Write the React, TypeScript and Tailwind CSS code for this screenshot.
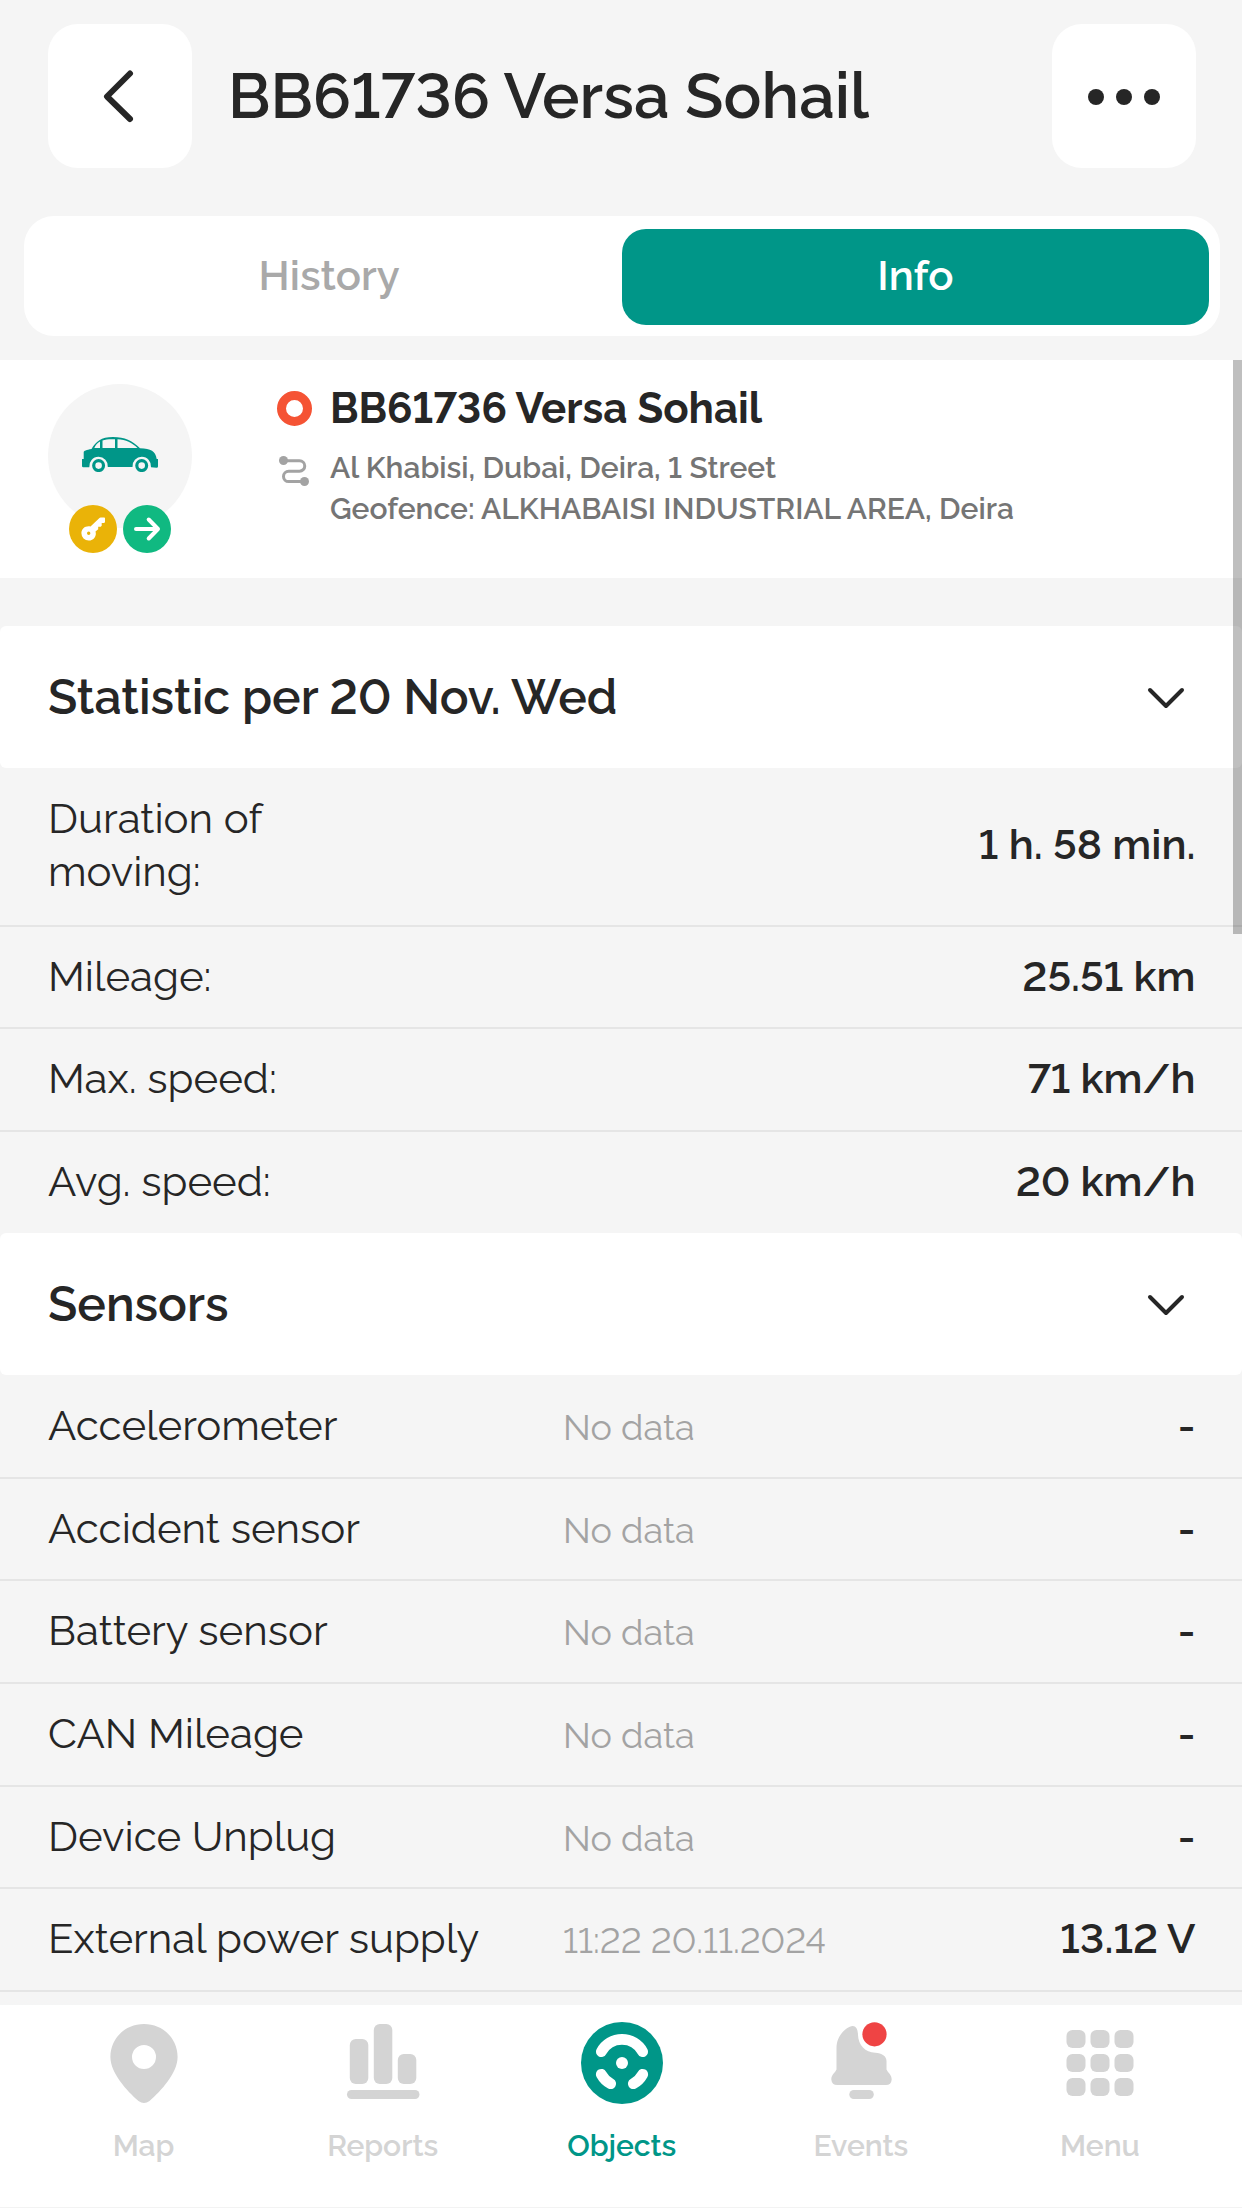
import clsx from 'clsx';
import type { ReactNode } from 'react';

const stats = [
  { label: 'Duration of moving:', value: '1 h. 58 min.' },
  { label: 'Mileage:', value: '25.51 km' },
  { label: 'Max. speed:', value: '71 km/h' },
  { label: 'Avg. speed:', value: '20 km/h' },
];

const sensors = [
  { label: 'Accelerometer', time: 'No data', value: '-' },
  { label: 'Accident sensor', time: 'No data', value: '-' },
  { label: 'Battery sensor', time: 'No data', value: '-' },
  { label: 'CAN Mileage', time: 'No data', value: '-' },
  { label: 'Device Unplug', time: 'No data', value: '-' },
  { label: 'External power supply', time: '11:22 20.11.2024', value: '13.12 V' },
];

const CarIcon = () => (
  <svg width="76" height="35" viewBox="0 0 76 35" fill="#009688">
    <path
      fillRule="evenodd"
      d="M1.7 15.5C1.7 13.6 4.5 13 9.5 12C14 4.5 19 0 31 0C43 0 50 3.5 58 11.3C69 12 73.5 14 74.7 22H76V29.5Q76 30.7 74.5 30.7L69 30.2A9.3 9.3 0 1 0 50.5 30H25.8A9.3 9.3 0 1 0 7.3 30.2H1.3Q0 30.2 0 29V22H1.7ZM12.3 11H18V4.6C15.2 6 13.5 8.2 12.3 11ZM20.5 11H33V2.3C28 2 23.8 2.3 20.5 3.5ZM35.5 11H55.5C50 5.7 44 2.6 35.5 2.3Z"
    />
    <circle cx="16.6" cy="28.6" r="4.9" fill="none" stroke="#009688" strokeWidth="3.2" />
    <circle cx="59.7" cy="28.6" r="4.9" fill="none" stroke="#009688" strokeWidth="3.2" />
  </svg>
);

const KeyIcon = () => (
  <svg width="48" height="48" viewBox="0 0 48 48" fill="#fff">
    <path
      fillRule="evenodd"
      d="M30.2 13.2Q30.7 12.5 31.7 12.5H35.2Q36 12.5 36 13.3V17.2L35 18H32.7V20.7L31.7 21.7H29.2V24.2L26.5 26.5C28 31 24.7 35.6 19.7 35.6A7.3 7.3 0 0 1 12.4 28.3C12.4 23.5 16.5 20.5 21.5 21.5ZM19.7 26.6A1.7 1.7 0 1 0 19.7 30A1.7 1.7 0 1 0 19.7 26.6Z"
    />
  </svg>
);

const ArrowIcon = () => (
  <svg width="48" height="48" viewBox="0 0 48 48" fill="none" stroke="#fff" strokeWidth="4" strokeLinecap="round" strokeLinejoin="round">
    <path d="M13 24H35M25.7 14.5L35 24L25.7 33.5" />
  </svg>
);

const RouteIcon = () => (
  <svg width="30" height="30" viewBox="0 0 30 30" fill="none" stroke="#a3a3a3" strokeWidth="3">
    <path d="M4.5 4.7H20.5A5.2 5.2 0 0 1 20.5 15.2H9.7A5.2 5.2 0 0 0 9.7 25.6H25.5" />
    <circle cx="4.5" cy="4.5" r="4.5" fill="#a3a3a3" stroke="none" />
    <circle cx="25.5" cy="25.5" r="4.5" fill="#a3a3a3" stroke="none" />
  </svg>
);

const MapIcon = () => (
  <path
    fillRule="evenodd"
    d="M48 9C67 9 81.6 23.5 81.6 42C81.6 58 65 76 53.5 86Q48 90 42.5 86C31 76 14.4 58 14.4 42C14.4 23.5 29 9 48 9ZM48 30A12 12 0 1 0 48 54A12 12 0 1 0 48 30Z"
  />
);

const ReportsIcon = () => (
  <>
    <rect x="14.8" y="24" width="18.5" height="45" rx="6" />
    <rect x="38.8" y="9" width="18.5" height="60" rx="6" />
    <rect x="62.8" y="39" width="18.5" height="30" rx="6" />
    <rect x="12" y="75" width="72.5" height="9" rx="4.5" />
  </>
);

const ObjectsIcon = () => (
  <>
    <circle cx="48" cy="48" r="41" />
    <circle cx="48" cy="48" r="6" fill="#fff" />
    <g fill="none" stroke="#fff" strokeWidth="10.8" strokeLinecap="round">
      <path d="M27.3 36.7A23.5 23.5 0 0 1 68.7 36.7" />
      <path d="M27.3 59.3A23.5 23.5 0 0 0 36.7 68.7" />
      <path d="M68.7 59.3A23.5 23.5 0 0 1 59.3 68.7" />
    </g>
  </>
);

const EventsIcon = () => (
  <>
    <path d="M36.8 11.7C41.8 9.5 44.9 12.5 45 20C45.300 30 52.300 37.5 62.300 37.7C68.800 38 73.500 41 73.500 46V54.5C74.800 57.5 78.700 59.5 78.700 64.5Q78.300 70 72.800 70H24.300Q18.800 70 18.300 64.5C18.300 59.5 22.300 57.5 23.500 54.5V33C23.500 23.5 29.300 15 36.8 11.7Z" />
    <rect x="36.3" y="75" width="24.5" height="9" rx="4.5" />
    <circle cx="61.5" cy="19.3" r="12.1" fill="#ef4444" />
  </>
);

const MenuIcon = () => (
  <>
    {[15, 39, 63].map(y =>
      [14.5, 38.5, 62.5].map(x => (
        <rect key={`${x}-${y}`} x={x} y={y} width="19" height="18" rx="6" />
      ))
    )}
  </>
);

const navItems = [
  { label: 'Map', icon: <MapIcon /> },
  { label: 'Reports', icon: <ReportsIcon /> },
  { label: 'Objects', icon: <ObjectsIcon />, active: true },
  { label: 'Events', icon: <EventsIcon /> },
  { label: 'Menu', icon: <MenuIcon /> },
];

const Header = () => (
  <header className="flex h-[216px] shrink-0 items-start pt-6 pr-[46.5px] pl-12">
    <button className="flex size-36 items-center justify-center rounded-[30px] bg-white">
      <svg width="36" height="54" viewBox="0 0 36 54" fill="none" stroke="#262626" strokeWidth="6" strokeLinecap="round" strokeLinejoin="round">
        <path d="M28 4.5L5 27.5L28 50" />
      </svg>
    </button>
    <h1 className="flex h-36 flex-1 items-center pl-9 text-[63px] font-semibold">BB61736 Versa Sohail</h1>
    <button className="flex size-36 items-center justify-center gap-3 rounded-[30px] bg-white pt-0.5">
      <span className="size-4 rounded-full bg-neutral-800" />
      <span className="size-4 rounded-full bg-neutral-800" />
      <span className="size-4 rounded-full bg-neutral-800" />
    </button>
  </header>
);

const Tabs = () => (
  <div className="mr-[22.5px] mb-6 ml-6 flex h-[120px] shrink-0 rounded-[30px] bg-white pt-[13px] pr-[11px] pb-[11px] pl-3 text-[42px] font-semibold">
    <button className="flex-1 pb-1 text-[#a9a9a9]">History</button>
    <button className="flex-1 rounded-3xl bg-[#009688] pb-1 text-white">Info</button>
  </div>
);

const ObjectCard = () => (
  <section className="flex h-[218px] shrink-0 bg-white pt-6 pl-12">
    <div className="relative mr-[84px] flex size-36 items-center justify-center rounded-full bg-neutral-100 pb-1">
      <CarIcon />
      {/* status badges hang over the bottom of the avatar */}
      <div className="absolute top-[121px] left-[21px] flex gap-1.5">
        <span className="rounded-full bg-[#eab308]"><KeyIcon /></span>
        <span className="rounded-full bg-[#10b981]"><ArrowIcon /></span>
      </div>
    </div>
    <div>
      <div className="flex h-12 items-center">
        <span className="mr-[18px] ml-px size-[35px] rounded-full border-[9px] border-[#f55334]" />
        <span className="pt-0.5 text-[42px] leading-[48px] font-bold">BB61736 Versa Sohail</span>
      </div>
      <div className="mt-[15px] flex text-[30px] leading-[41px] font-semibold text-[#757575]">
        <span className="mt-[9px] mr-[18px] ml-[3px] w-[33px]"><RouteIcon /></span>
        <p>
          Al Khabisi, Dubai, Deira, 1 Street
          <br />
          Geofence: ALKHABAISI INDUSTRIAL AREA, Deira
        </p>
      </div>
    </div>
  </section>
);

const SectionHeader = ({ children }: { children: ReactNode }) => (
  <div className="flex h-[142px] shrink-0 items-center justify-between rounded-md bg-white pr-[57px] pl-12">
    <h2 className="text-[48px] leading-[60px] font-semibold">{children}</h2>
    <svg className="mt-0.5" width="38" height="22" viewBox="0 0 38 22" fill="none" stroke="#262626" strokeWidth="4" strokeLinecap="round" strokeLinejoin="round">
      <path d="M3 3L19 19L35 3" />
    </svg>
  </div>
);

const BottomNav = () => (
  <nav className="z-10 flex h-[203px] shrink-0 border-b border-[#f3f3f3] bg-white pt-[10px] pr-[22.5px] pl-6">
    {navItems.map(({ label, icon, active }) => (
      <div
        key={label}
        className={clsx('flex flex-1 flex-col items-center', active ? 'text-[#009688]' : 'text-[#d4d4d4]')}
      >
        <svg width="96" height="96" viewBox="0 0 96 96" fill="currentColor">{icon}</svg>
        <span className="mt-[17px] text-[30px] leading-9 font-semibold">{label}</span>
      </div>
    ))}
  </nav>
);

export default function App() {
  return (
    <div className="flex h-[2208px] w-[1242px] flex-col overflow-hidden bg-neutral-100 font-['Raleway','Lato',sans-serif] text-neutral-800 lining-nums">
      <Header />
      <Tabs />
      <main className="relative flex min-h-0 flex-1 flex-col overflow-hidden">
        <ObjectCard />
        <div className="h-12 shrink-0" />
        <SectionHeader>Statistic per 20 Nov. Wed</SectionHeader>
        <div className="shrink-0 pt-px text-[42px] leading-[52.5px]">
          {stats.map(({ label, value }) => (
            <div
              key={label}
              className="flex items-center justify-between border-b-2 border-[#e5e5e5] pt-6 pr-[46.5px] pb-[24.1px] pl-12 first:pb-[26.8px] last:border-b-0"
            >
              <span className="max-w-[300px]">{label}</span>
              <span className="font-semibold">{value}</span>
            </div>
          ))}
        </div>
        <SectionHeader>Sensors</SectionHeader>
        <div className="shrink-0 pt-[1.6px] text-[42px] leading-[52.5px]">
          {sensors.map(({ label, time, value }) => (
            <div
              key={label}
              className="flex h-[102.6px] items-baseline border-b-2 border-[#e5e5e5] pt-6 pr-[46.5px] pl-12"
            >
              <span className="w-[515px]">{label}</span>
              <span className="flex-1 text-[36px] leading-9 text-[#a3a3a3]">{time}</span>
              <span className="font-semibold">{value}</span>
            </div>
          ))}
        </div>
        {/* scroll thumb */}
        <div className="absolute top-0 right-0 h-[574px] w-[9px] bg-black/25" />
      </main>
      <BottomNav />
    </div>
  );
}
